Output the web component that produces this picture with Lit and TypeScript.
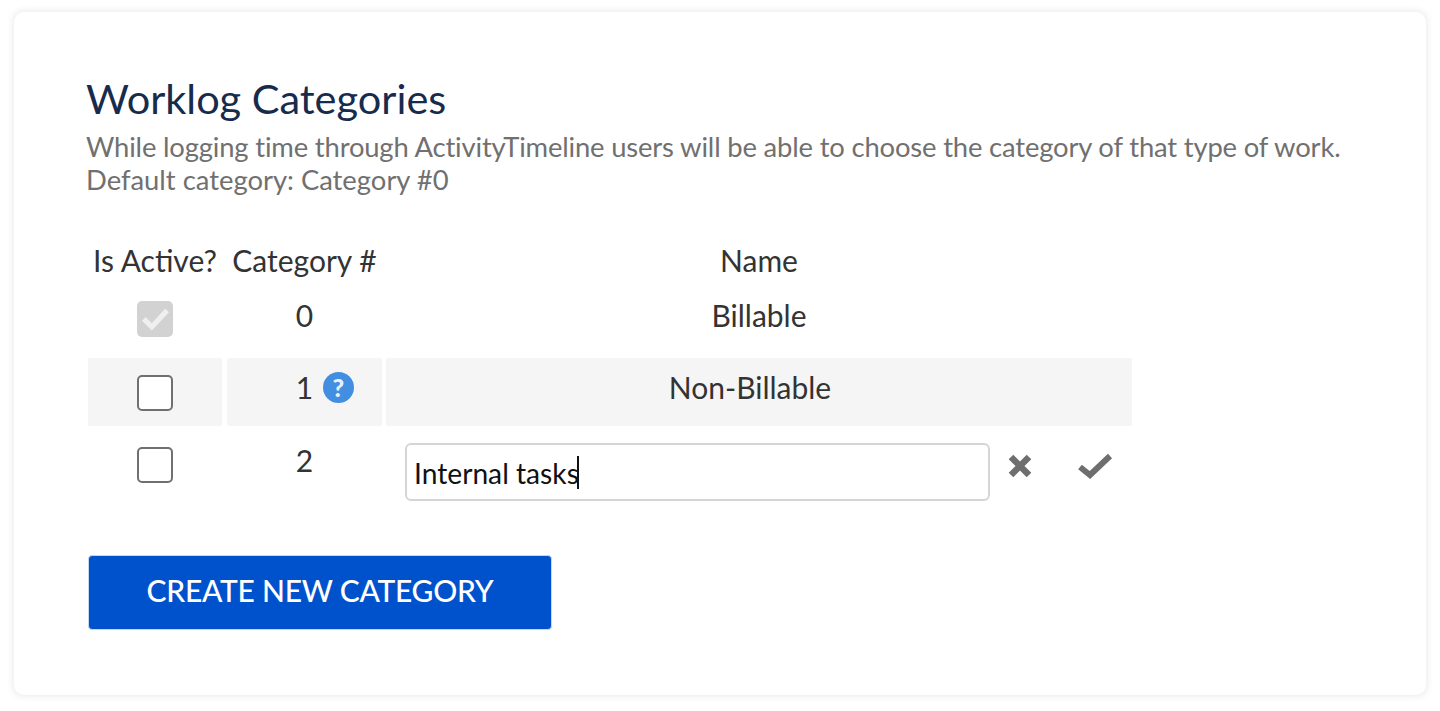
import { LitElement, html, css, svg } from "lit";
import { customElement } from "lit/decorators.js";

const checkPath = "M2 13 L5 10 L10 15 L21 3 L24 6 L10 21 Z";

@customElement("app-root")
export class AppRoot extends LitElement {
  static styles = css`
    :host {
      display: block;
      height: 711px;
      background: #fff;
      font-family: Lato, "Open Sans", sans-serif;
      color: #333;
      box-sizing: border-box;
      padding: 12px 14px 16px;
      overflow: hidden;
    }
    .card {
      height: 683px;
      box-sizing: border-box;
      background: #fff;
      border-radius: 10px;
      box-shadow: 0 0 6px 2px rgba(0, 0, 0, 0.07);
      padding: 61px 73px 0 73px;
    }
    h1 {
      margin: 0;
      font-size: 41.5px;
      line-height: 50px;
      font-weight: 400;
      color: #172b4d;
      margin-left: -1px;
    }
    .desc {
      margin: 7px 0 0;
      font-size: 27.4px;
      line-height: 33px;
      color: #707070;
      white-space: nowrap;
      margin-left: -1px;
    }
    .line1 { letter-spacing: -0.16px; display: block; }
    .line2 { display: block; }
    .grid {
      margin: 38px 0 0 1px;
      display: grid;
      grid-template-columns: 135px 155px 746px;
      grid-template-rows: 54px 70px 68px 129px;
      column-gap: 4px;
      font-size: 30px;
      line-height: 34px;
      text-align: center;
    }
    .cell {
      display: flex;
      justify-content: center;
      align-items: flex-start;
      white-space: nowrap;
    }
    .head { padding-top: 9px; }
    .first { margin-right: 1px; }
    .r0 { padding-top: 10px; }
    .r0.box { padding-top: 13px; }
    .r1 { background: #f5f5f5; padding-top: 12px; border-radius: 2px; }
    .r1.box { padding-top: 17px; }
    .r2 { padding-top: 17px; }
    .r2.box { padding-top: 21px; }
    .shift { padding-right: 18px; box-sizing: border-box; }
    .box-input {
      width: 36px;
      height: 36px;
      box-sizing: border-box;
      border: 2px solid #707070;
      border-radius: 5px;
      background: #fff;
    }
    .box-input.on {
      border: none;
      background: #d2d2d2;
      display: flex;
      align-items: center;
      justify-content: center;
    }
    .box-input.on svg { width: 27px; height: 25px; fill: #efefef; }
    .num { position: relative; }
    .help {
      position: absolute;
      left: 27px;
      top: 2px;
      width: 31px;
      height: 31px;
      border-radius: 50%;
      background: #428ee0;
      color: #e8f1fb;
      font-weight: 900;
      font-size: 25px;
      line-height: 31px;
      text-align: center;
    }
    .edit {
      justify-content: flex-start;
      align-items: flex-start;
      padding: 17px 0 0 19px;
    }
    .field {
      width: 585px;
      height: 58px;
      box-sizing: border-box;
      border: 2px solid #d5d5d5;
      border-radius: 6px;
      padding: 11px 0 0 7px;
      font-size: 28.2px;
      line-height: 34px;
      color: #111;
      text-align: left;
      display: flex;
    }
    .caret {
      width: 2px;
      height: 33px;
      margin-left: -2px;
      background: #111;
    }
    .actions {
      display: flex;
      align-items: center;
      height: 46px;
    }
    .x { width: 26px; height: 26px; margin-left: 17px; }
    .ok { width: 36px; height: 28px; margin-left: 44px; }
    .actions svg { fill: none; stroke: #6e6e6e; display: block; }
    button {
      display: block;
      margin: 0 0 0 1px;
      width: 464px;
      height: 75px;
      box-sizing: border-box;
      background: #0052cc;
      border: 1px solid #c4d8f3;
      border-radius: 4px;
      color: #fff;
      font: 500 30px Lato, sans-serif;
      letter-spacing: -0.25px;
      padding: 0 0 5px;
    }
  `;

  render() {
    return html`
      <div class="card">
        <h1>Worklog Categories</h1>
        <p class="desc"><span class="line1">While logging time through ActivityTimeline users will be able to choose the category of that type of work.</span><span class="line2">Default category: Category #0</span></p>
        <div class="grid">
          <div class="cell head first">Is Active?</div>
          <div class="cell head">Category #</div>
          <div class="cell head">Name</div>

          <div class="cell r0 box first"><div class="box-input on"><svg viewBox="2 3 22 18">${svg`<path d=${checkPath} />`}</svg></div></div>
          <div class="cell r0">0</div>
          <div class="cell r0">Billable</div>

          <div class="cell r1 box first"><div class="box-input"></div></div>
          <div class="cell r1"><span class="num">1<span class="help">?</span></span></div>
          <div class="cell r1 shift">Non-Billable</div>

          <div class="cell r2 box first"><div class="box-input"></div></div>
          <div class="cell r2">2</div>
          <div class="cell edit">
            <div class="field">Internal tasks<span class="caret"></span></div>
            <div class="actions">
              <svg class="x" viewBox="0 0 26 26" stroke-width="6.5"><path d="M4 4 L22 22 M22 4 L4 22" /></svg>
              <svg class="ok" viewBox="0 0 36 28" stroke-width="6"><path d="M3 15 L13 23 L33 4" /></svg>
            </div>
          </div>
        </div>
        <button>CREATE NEW CATEGORY</button>
      </div>
    `;
  }
}
